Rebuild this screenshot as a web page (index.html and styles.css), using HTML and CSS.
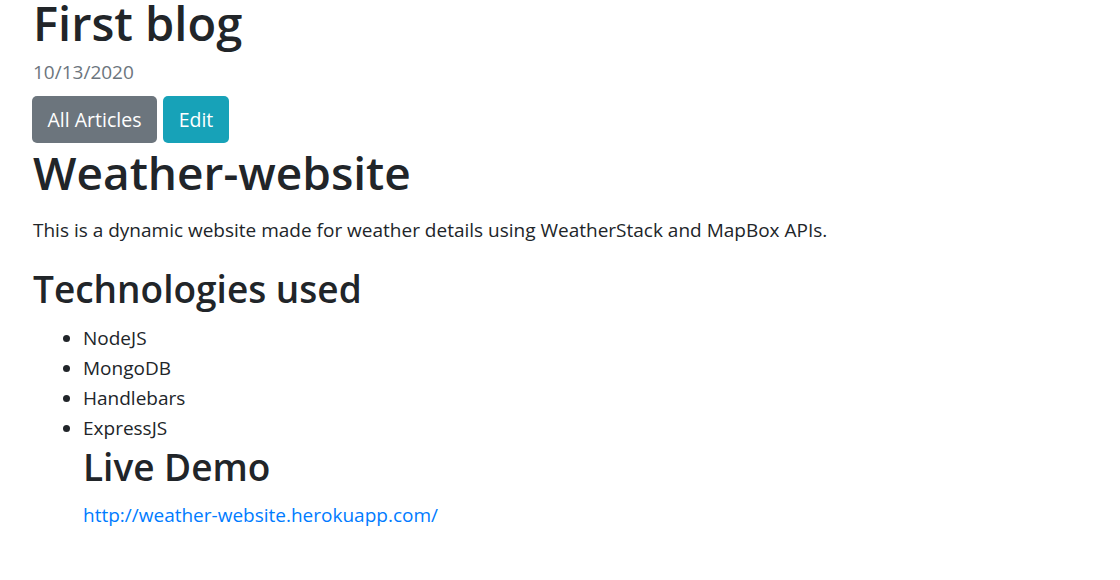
FILE: index.html
```html
<!DOCTYPE html>
<html lang="en">
<head>
<meta charset="utf-8">
<title>First blog</title>
<link rel="stylesheet" href="styles.css">
</head>
<body>
<div class="container">
  <h1 class="title">First blog</h1>
  <div class="date">10/13/2020</div>
  <div class="actions">
    <a class="btn btn-secondary" href="#">All Articles</a>
    <a class="btn btn-info" href="#">Edit</a>
  </div>
  <div class="article">
    <h1 class="article-h1">Weather-website</h1>
    <p class="article-p">This is a dynamic website made for weather details using WeatherStack and MapBox APIs.</p>
    <h2 class="article-h2">Technologies used</h2>
    <ul class="tech-list">
      <li>NodeJS</li>
      <li>MongoDB</li>
      <li>Handlebars</li>
      <li>ExpressJS
        <h2 class="demo-h2">Live Demo</h2>
        <a class="demo-link" href="#">http://weather-website.herokuapp.com/</a>
      </li>
    </ul>
  </div>
</div>
</body>
</html>
```

FILE: styles.css
```css
html, body {
  margin: 0;
  padding: 0;
  background: #ffffff;
}

body {
  font-family: "Open Sans", "Noto Sans", "Liberation Sans", sans-serif;
  color: #212529;
  font-size: 19px;
  line-height: 30px;
}

.container {
  padding-left: 33px;
}

.title {
  font-size: 47px;
  line-height: 46px;
  font-weight: 600;
  margin: 0;
}

.date {
  color: #6c757d;
  line-height: 30px;
  margin-top: 11px;
}

.actions {
  display: flex;
  gap: 6px;
  margin-top: 9px;
  margin-left: -1px;
}

.btn {
  display: inline-flex;
  align-items: center;
  justify-content: center;
  height: 47px;
  box-sizing: border-box;
  padding: 0;
  border-radius: 5px;
  color: #ffffff;
  text-decoration: none;
  white-space: nowrap;
  font-size: 19.5px;
}

.btn-secondary {
  background: #6c757d;
  width: 125px;
}

.btn-info {
  background: #17a2b8;
  width: 66px;
}

.article-h1 {
  font-size: 46px;
  line-height: 54px;
  font-weight: 600;
  margin: 2px 0 0 0;
}

.article-p {
  margin: 16px 0 0 0;
}

.article-h2 {
  font-size: 37px;
  line-height: 44px;
  font-weight: 600;
  margin: 22px 0 0 0;
}

.tech-list {
  margin: 12px 0 0 0;
  padding-left: 50px;
}

.demo-h2 {
  font-size: 37px;
  line-height: 44px;
  font-weight: 600;
  margin: 2px 0 0 0;
}

.demo-link {
  display: block;
  margin-top: 11px;
  color: #007bff;
  text-decoration: none;
}
```
